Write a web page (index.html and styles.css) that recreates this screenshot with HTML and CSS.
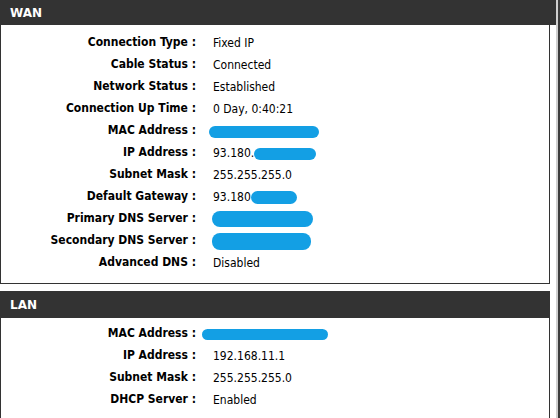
FILE: index.html
```html
<!DOCTYPE html>
<html>
<head>
<meta charset="utf-8">
<link rel="stylesheet" href="styles.css">
</head>
<body>
<div class="page">
  <div class="main">
    <section class="section wan">
      <h2 class="head head-wide">WAN</h2>
      <div class="body">
        <div class="grid">
          <div class="lbl">Connection Type :</div><div class="val">Fixed IP</div>
          <div class="lbl">Cable Status :</div><div class="val">Connected</div>
          <div class="lbl">Network Status :</div><div class="val">Established</div>
          <div class="lbl">Connection Up Time :</div><div class="val">0 Day, 0:40:21</div>
          <div class="lbl">MAC Address :</div><div class="val"><span class="blob b-wmac"></span></div>
          <div class="lbl">IP Address :</div><div class="val">93.180.<span class="blob b-ip"></span></div>
          <div class="lbl">Subnet Mask :</div><div class="val">255.255.255.0</div>
          <div class="lbl">Default Gateway :</div><div class="val">93.180<span class="blob b-gw"></span></div>
          <div class="lbl">Primary DNS Server :</div><div class="val"><span class="blob b-dns1"></span></div>
          <div class="lbl">Secondary DNS Server :</div><div class="val"><span class="blob b-dns2"></span></div>
          <div class="lbl">Advanced DNS :</div><div class="val">Disabled</div>
        </div>
      </div>
    </section>
    <section class="section lan">
      <h2 class="head">LAN</h2>
      <div class="body">
        <div class="grid">
          <div class="lbl">MAC Address :</div><div class="val"><span class="blob b-lmac"></span></div>
          <div class="lbl">IP Address :</div><div class="val">192.168.11.1</div>
          <div class="lbl">Subnet Mask :</div><div class="val">255.255.255.0</div>
          <div class="lbl">DHCP Server :</div><div class="val">Enabled</div>
        </div>
      </div>
    </section>
  </div>
  <div class="rail"></div>
</div>
</body>
</html>
```
FILE: styles.css
```css
html, body {
  margin: 0;
  padding: 0;
  background: #ffffff;
}
.page {
  display: flex;
  width: 560px;
  height: 418px;
  overflow: hidden;
}
.main {
  width: 556px;
  flex: none;
}
.rail {
  flex: 1;
  background: #3c3c3c;
  border-left: 2px solid #cfcfcf;
}
.section {
  width: 550px;
}
.lan {
  margin-top: 7px;
}
.head {
  margin: 0;
  background: #333333;
  color: #ffffff;
  font-family: "DejaVu Sans", Verdana, sans-serif;
  font-weight: bold;
  font-size: 12px;
  padding-left: 10px;
  display: flex;
  align-items: center;
}
.wan .head {
  height: 25px;
  margin-right: -6px;
}
.lan .head {
  height: 27px;
}
.body {
  border: 1px solid #333333;
  border-top: none;
}
.wan .body {
  padding: 6px 0 10px;
}
.lan .body {
  padding: 4px 0 8px;
}
.grid {
  display: grid;
  grid-template-columns: 195px 1fr;
  column-gap: 17px;
  grid-auto-rows: 22px;
  align-items: center;
  font-family: "DejaVu Sans Condensed", "DejaVu Sans", Tahoma, sans-serif;
  font-size: 12px;
  color: #000000;
}
.lbl {
  font-weight: bold;
  text-align: right;
}
.val {
  padding-top: 2px;
  white-space: nowrap;
}
.blob {
  display: inline-block;
  vertical-align: middle;
  background: #139fe4;
  border-radius: 8px;
  filter: blur(0.5px);
}
.b-wmac { width: 110px; height: 12px; margin-left: -4px; }
.b-ip { width: 62px; height: 12px; }
.b-gw { width: 46px; height: 13px; }
.b-dns1 { width: 101px; height: 16px; margin-left: -1px; }
.b-dns2 { width: 99px; height: 17px; margin-left: -1px; }
.b-lmac { width: 126px; height: 11px; margin-left: -11px; }
```
